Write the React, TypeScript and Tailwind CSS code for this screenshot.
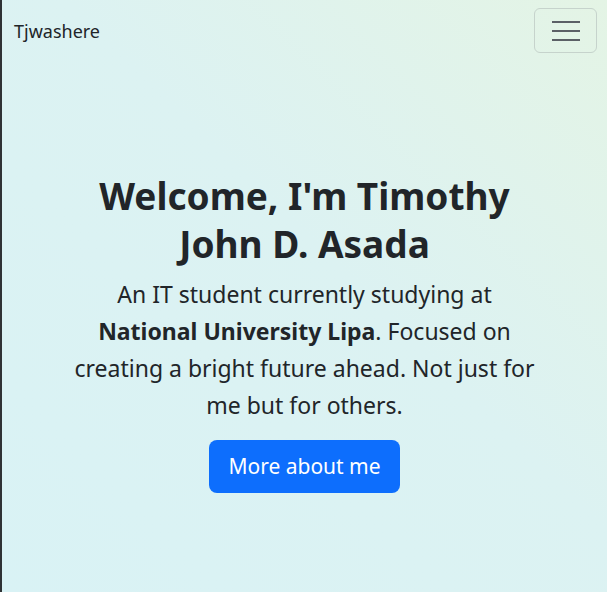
import React from 'react';

export default function App() {
  return (
    <div className="flex min-h-[592px] w-full bg-[#d9f2f5]">
      {/* window edge */}
      <div className="w-[2px] shrink-0 bg-[#2f3235]" />

      <div className="flex-1 min-h-[592px] bg-gradient-to-bl from-[#e4f4e5] via-[#dcf2f2] via-45% to-[#d9f2f5] font-['Noto_Sans',sans-serif] text-[#212529]">
        {/* Navbar */}
        <nav className="flex h-[61px] items-center justify-between pl-[12px] pr-[10px]">
          <span className="text-[18px] leading-none">Tjwashere</span>
          <button className="flex h-[45px] w-[63px] flex-col items-center justify-center gap-[7px] rounded-[6px] border border-[#c6d3cc]">
            <span className="h-[2px] w-[28px] bg-[#5b6066]" />
            <span className="h-[2px] w-[28px] bg-[#5b6066]" />
            <span className="h-[2px] w-[28px] bg-[#5b6066]" />
          </button>
        </nav>

        {/* Hero */}
        <main className="flex flex-col items-center px-4 pt-[111px] text-center">
          <h1 className="mb-2 max-w-[470px] text-[37px] font-bold leading-[48px]">
            Welcome, I'm Timothy John D. Asada
          </h1>
          <p className="mb-4 max-w-[472px] text-[23px] leading-[37px]">
            An IT student currently studying at <strong className="font-bold">National University Lipa</strong>. Focused on creating a bright future ahead. Not just for me but for others.
          </p>
          <button className="h-[53px] rounded-[8px] bg-[#0d6efd] px-[19px] text-[21px] text-white">
            More about me
          </button>
        </main>
      </div>
    </div>
  );
}
